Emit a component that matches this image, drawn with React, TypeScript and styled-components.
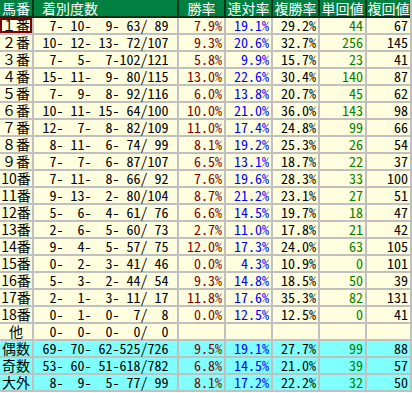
import styled, { createGlobalStyle } from 'styled-components';

const GlobalStyle = createGlobalStyle`
    body {
        margin: 0;
        background: #ffffff;
    }
`;

const COLS = '32px 143px 45px 45px 45px 45px 43px';

const Table = styled.div`
    display: flex;
    flex-direction: column;
    width: 412px;
    padding-right: 2px;
    box-sizing: border-box;
    background: #c0c0c0;
    font-family: 'Noto Sans CJK JP', sans-serif;
    font-size: 14px;
    white-space: pre;
`;

const HeaderRow = styled.div`
    display: grid;
    grid-template-columns: ${COLS};
    column-gap: 2px;
    background: #00331a;
    padding-bottom: 2px;
`;

const HeadCell = styled.div<{ $left?: boolean }>`
    height: 16px;
    line-height: 16px;
    background: #008040;
    color: #ffffff;
    text-align: ${(p) => (p.$left ? 'left' : 'center')};
    padding-left: ${(p) => (p.$left ? '8px' : '0')};
`;

const Row = styled.div<{ $bg: string }>`
    display: grid;
    grid-template-columns: ${COLS};
    column-gap: 2px;
    margin-bottom: 2px;

    & > div {
        background: ${(p) => p.$bg};
    }
`;

const Cell = styled.div<{ $color?: string; $center?: boolean }>`
    height: 15px;
    line-height: 15px;
    color: ${(p) => p.$color || '#000000'};
    text-align: ${(p) => (p.$center ? 'center' : 'right')};
    padding-right: ${(p) => (p.$center ? '0' : '2px')};
    font-feature-settings: 'hwid' 1;
`;

const LabelCell = styled.div<{ $marked?: boolean }>`
    height: 15px;
    line-height: 15px;
    color: #000000;
    text-align: center;
    box-shadow: ${(p) => (p.$marked ? 'inset 0 0 0 2px #800000' : 'none')};
`;

type Entry = {
    label: string;
    rec: number[];
    win?: string;
    rentai?: string;
    fukusho?: string;
    tan?: number;
    fuku?: number;
    summary?: boolean;
};

const pad = (n: number, w: number) => String(n).padStart(w, ' ');

const record = (r: number[]) =>
    `${pad(r[0], 2)}-${pad(r[1], 3)}-${pad(r[2], 3)}-${pad(r[3], 3)}/${pad(r[4], 3)}`;

const rows: Entry[] = [
    { label: '１番', rec: [7, 10, 9, 63, 89], win: '7.9%', rentai: '19.1%', fukusho: '29.2%', tan: 44, fuku: 67 },
    { label: '２番', rec: [10, 12, 13, 72, 107], win: '9.3%', rentai: '20.6%', fukusho: '32.7%', tan: 256, fuku: 145 },
    { label: '３番', rec: [7, 5, 7, 102, 121], win: '5.8%', rentai: '9.9%', fukusho: '15.7%', tan: 23, fuku: 41 },
    { label: '４番', rec: [15, 11, 9, 80, 115], win: '13.0%', rentai: '22.6%', fukusho: '30.4%', tan: 140, fuku: 87 },
    { label: '５番', rec: [7, 9, 8, 92, 116], win: '6.0%', rentai: '13.8%', fukusho: '20.7%', tan: 45, fuku: 62 },
    { label: '６番', rec: [10, 11, 15, 64, 100], win: '10.0%', rentai: '21.0%', fukusho: '36.0%', tan: 143, fuku: 98 },
    { label: '７番', rec: [12, 7, 8, 82, 109], win: '11.0%', rentai: '17.4%', fukusho: '24.8%', tan: 99, fuku: 66 },
    { label: '８番', rec: [8, 11, 6, 74, 99], win: '8.1%', rentai: '19.2%', fukusho: '25.3%', tan: 26, fuku: 54 },
    { label: '９番', rec: [7, 7, 6, 87, 107], win: '6.5%', rentai: '13.1%', fukusho: '18.7%', tan: 22, fuku: 37 },
    { label: '10番', rec: [7, 11, 8, 66, 92], win: '7.6%', rentai: '19.6%', fukusho: '28.3%', tan: 33, fuku: 100 },
    { label: '11番', rec: [9, 13, 2, 80, 104], win: '8.7%', rentai: '21.2%', fukusho: '23.1%', tan: 27, fuku: 51 },
    { label: '12番', rec: [5, 6, 4, 61, 76], win: '6.6%', rentai: '14.5%', fukusho: '19.7%', tan: 18, fuku: 47 },
    { label: '13番', rec: [2, 6, 5, 60, 73], win: '2.7%', rentai: '11.0%', fukusho: '17.8%', tan: 21, fuku: 42 },
    { label: '14番', rec: [9, 4, 5, 57, 75], win: '12.0%', rentai: '17.3%', fukusho: '24.0%', tan: 63, fuku: 105 },
    { label: '15番', rec: [0, 2, 3, 41, 46], win: '0.0%', rentai: '4.3%', fukusho: '10.9%', tan: 0, fuku: 101 },
    { label: '16番', rec: [5, 3, 2, 44, 54], win: '9.3%', rentai: '14.8%', fukusho: '18.5%', tan: 50, fuku: 39 },
    { label: '17番', rec: [2, 1, 3, 11, 17], win: '11.8%', rentai: '17.6%', fukusho: '35.3%', tan: 82, fuku: 131 },
    { label: '18番', rec: [0, 1, 0, 7, 8], win: '0.0%', rentai: '12.5%', fukusho: '12.5%', tan: 0, fuku: 41 },
    { label: '他', rec: [0, 0, 0, 0, 0] },
    { label: '偶数', rec: [69, 70, 62, 525, 726], win: '9.5%', rentai: '19.1%', fukusho: '27.7%', tan: 99, fuku: 88, summary: true },
    { label: '奇数', rec: [53, 60, 51, 618, 782], win: '6.8%', rentai: '14.5%', fukusho: '21.0%', tan: 39, fuku: 57, summary: true },
    { label: '大外', rec: [8, 9, 5, 77, 99], win: '8.1%', rentai: '17.2%', fukusho: '22.2%', tan: 32, fuku: 50, summary: true },
];

const headers = ['馬番', '着別度数', '勝率', '連対率', '複勝率', '単回値', '複回値'];

const App = () => {
    return (
        <>
            <GlobalStyle />
            <Table>
                <HeaderRow>
                    {headers.map((h, i) => (
                        <HeadCell key={h} $left={i === 1}>
                            {h}
                        </HeadCell>
                    ))}
                </HeaderRow>
                {rows.map((r, i) => (
                    <Row key={r.label} $bg={r.summary ? '#80ffff' : '#ffffe0'}>
                        <LabelCell $marked={i === 0}>{r.label}</LabelCell>
                        <Cell $center>{record(r.rec)}</Cell>
                        <Cell $color="#800000">{r.win ?? ''}</Cell>
                        <Cell $color="#0000ff">{r.rentai ?? ''}</Cell>
                        <Cell>{r.fukusho ?? ''}</Cell>
                        <Cell $color="#008000">{r.tan ?? ''}</Cell>
                        <Cell>{r.fuku ?? ''}</Cell>
                    </Row>
                ))}
            </Table>
        </>
    );
};

export default App;
